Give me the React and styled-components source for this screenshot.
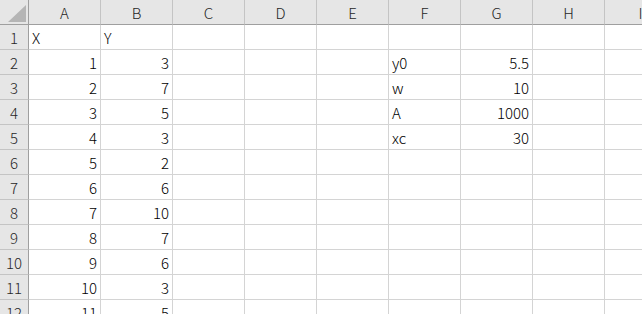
import React from "react";
import styled, { createGlobalStyle } from "styled-components";

const GlobalStyle = createGlobalStyle`
  html, body {
    margin: 0;
    padding: 0;
    background: #ffffff;
    overflow: hidden;
  }
  body {
    font-family: "Noto Sans CJK JP", "Noto Sans", sans-serif;
  }
`;

const Sheet = styled.div`
  width: 642px;
  height: 314px;
  overflow: hidden;
  display: grid;
  grid-template-columns: 29px repeat(9, 72px);
  grid-auto-rows: 25px;
  font-family: "Noto Sans CJK JP", "Noto Sans", sans-serif;
  font-size: 15px;
  font-weight: 300;
  line-height: 1;
`;

const Corner = styled.div`
  box-sizing: border-box;
  background: #e6e6e6;
  border-right: 1px solid #9f9f9f;
  border-bottom: 1px solid #9f9f9f;
  position: relative;
  svg {
    position: absolute;
    left: 0;
    top: 0;
  }
`;

const ColHeader = styled.div`
  box-sizing: border-box;
  background: #e6e6e6;
  border-right: 1px solid #c4c4c4;
  border-bottom: 1px solid #9f9f9f;
  display: flex;
  align-items: center;
  justify-content: center;
  color: #262626;
`;

const RowHeader = styled.div`
  box-sizing: border-box;
  background: #e6e6e6;
  border-right: 1px solid #9f9f9f;
  border-bottom: 1px solid #c4c4c4;
  display: flex;
  align-items: center;
  justify-content: center;
  color: #262626;
`;

const Cell = styled.div`
  box-sizing: border-box;
  background: #ffffff;
  border-right: 1px solid #d4d4d4;
  border-bottom: 1px solid #d4d4d4;
  display: flex;
  align-items: center;
  justify-content: ${(p) => (p.$num ? "flex-end" : "flex-start")};
  padding: 0 3px 0 3px;
  color: #000000;
  white-space: nowrap;
  overflow: hidden;
`;

const cols = ["A", "B", "C", "D", "E", "F", "G", "H", "I"];

const data = {
  1: { A: "X", B: "Y" },
  2: { A: 1, B: 3, F: "y0", G: 5.5 },
  3: { A: 2, B: 7, F: "w", G: 10 },
  4: { A: 3, B: 5, F: "A", G: 1000 },
  5: { A: 4, B: 3, F: "xc", G: 30 },
  6: { A: 5, B: 2 },
  7: { A: 6, B: 6 },
  8: { A: 7, B: 10 },
  9: { A: 8, B: 7 },
  10: { A: 9, B: 6 },
  11: { A: 10, B: 3 },
  12: { A: 11, B: 5 },
};

export default function App() {
  const rows = Array.from({ length: 12 }, (_, i) => i + 1);
  return (
    <>
      <GlobalStyle />
      <Sheet>
        <Corner>
          <svg width="28" height="24" viewBox="0 0 28 24">
            <polygon points="26,5 26,22 8,22" fill="#b5b5b5" />
          </svg>
        </Corner>
        {cols.map((c) => (
          <ColHeader key={c}>{c}</ColHeader>
        ))}
        {rows.map((r) => (
          <React.Fragment key={r}>
            <RowHeader>{r}</RowHeader>
            {cols.map((c) => {
              const v = data[r] ? data[r][c] : undefined;
              return (
                <Cell key={c} $num={typeof v === "number"}>
                  {v !== undefined ? String(v) : ""}
                </Cell>
              );
            })}
          </React.Fragment>
        ))}
      </Sheet>
    </>
  );
}
